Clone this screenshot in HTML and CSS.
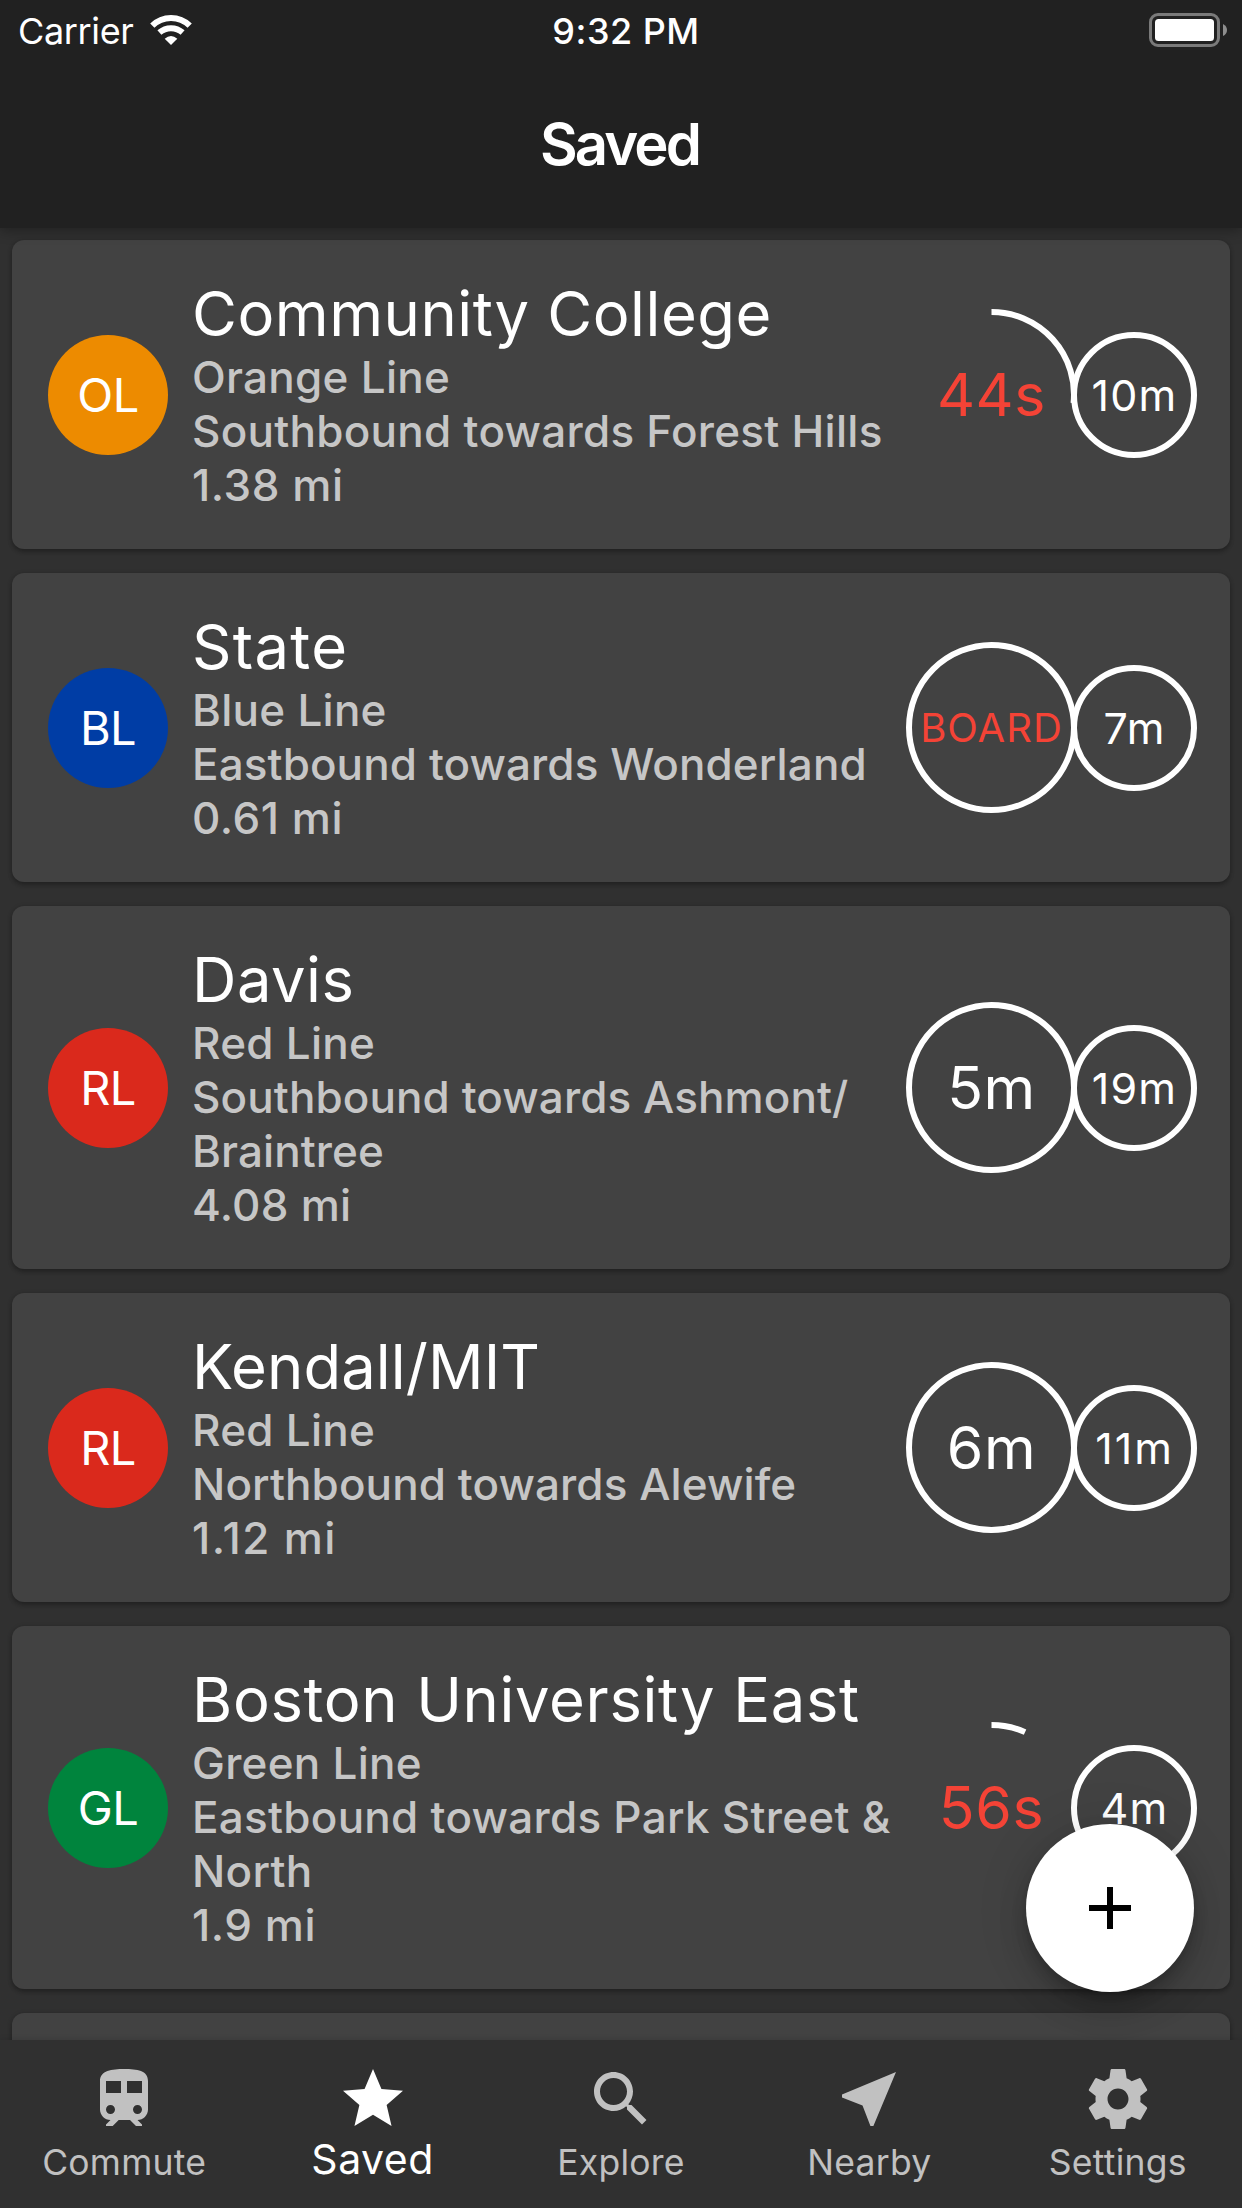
FILE: index.html
```
<!DOCTYPE html>
<html lang="en">
<head>
<meta charset="utf-8">
<title>Saved</title>
<link rel="stylesheet" href="styles.css">
</head>
<body>
<div class="app">
  <header class="app-bar">
    <div class="status">
      <div class="status-left">
        <span class="carrier">Carrier</span>
        <svg class="wifi" width="42" height="30" viewBox="0 0 42 30">
          <path d="M2.3 10.7A26.6 26.6 0 0 1 39.7 10.7" fill="none" stroke="#fff" stroke-width="6"/>
          <path d="M9.4 17.6A17.5 17.5 0 0 1 32.6 17.6" fill="none" stroke="#fff" stroke-width="6"/>
          <path d="M14.7 23.8Q21 18.4 27.3 23.8L21 30Z" fill="#fff"/>
        </svg>
      </div>
      <span class="time">9:32 PM</span>
      <svg class="battery" width="78" height="34" viewBox="0 0 78 34">
        <rect x="1.5" y="1.5" width="68" height="31" rx="7.5" fill="none" stroke="#7a7a7a" stroke-width="3"/>
        <rect x="6" y="6" width="59" height="22" rx="3.5" fill="#fff"/>
        <path d="M74 11Q78 13 78 17T74 23Z" fill="#8e8e8e"/>
      </svg>
    </div>
    <h1 class="title">Saved</h1>
  </header>

  <main class="list">
    <article class="card">
      <div class="avatar orange">OL</div>
      <div class="info">
        <h2>Community College</h2>
        <p>Orange Line</p>
        <p>Southbound towards Forest Hills</p>
        <p class="distance">1.38 mi</p>
      </div>
      <div class="dial large">
        <svg viewBox="0 0 165 165"><path d="M82.5 0A82.5 82.5 0 0 1 164.55 91.12"/></svg>
        <span class="soon">44s</span>
      </div>
      <div class="dial small">
        <svg viewBox="0 0 120 120"><circle cx="60" cy="60" r="60"/></svg>
        <span>10m</span>
      </div>
    </article>

    <article class="card">
      <div class="avatar blue">BL</div>
      <div class="info">
        <h2 class="short">State</h2>
        <p>Blue Line</p>
        <p class="snug">Eastbound towards Wonderland</p>
        <p class="distance">0.61 mi</p>
      </div>
      <div class="dial large">
        <svg viewBox="0 0 165 165"><circle cx="82.5" cy="82.5" r="82.5"/></svg>
        <span class="soon board">BOARD</span>
      </div>
      <div class="dial small">
        <svg viewBox="0 0 120 120"><circle cx="60" cy="60" r="60"/></svg>
        <span>7m</span>
      </div>
    </article>

    <article class="card">
      <div class="avatar red">RL</div>
      <div class="info">
        <h2>Davis</h2>
        <p>Red Line</p>
        <p class="snug">Southbound towards Ashmont/<br>Braintree</p>
        <p>4.08 mi</p>
      </div>
      <div class="dial large">
        <svg viewBox="0 0 165 165"><circle cx="82.5" cy="82.5" r="82.5"/></svg>
        <span>5m</span>
      </div>
      <div class="dial small">
        <svg viewBox="0 0 120 120"><circle cx="60" cy="60" r="60"/></svg>
        <span>19m</span>
      </div>
    </article>

    <article class="card">
      <div class="avatar red">RL</div>
      <div class="info">
        <h2 class="snug">Kendall/MIT</h2>
        <p>Red Line</p>
        <p class="snug">Northbound towards Alewife</p>
        <p class="distance ones">1.12 mi</p>
      </div>
      <div class="dial large">
        <svg viewBox="0 0 165 165"><circle cx="82.5" cy="82.5" r="82.5"/></svg>
        <span>6m</span>
      </div>
      <div class="dial small">
        <svg viewBox="0 0 120 120"><circle cx="60" cy="60" r="60"/></svg>
        <span class="ones">11m</span>
      </div>
    </article>

    <article class="card">
      <div class="avatar green">GL</div>
      <div class="info">
        <h2 class="long">Boston University East</h2>
        <p>Green Line</p>
        <p>Eastbound towards Park Street &amp;<br>North</p>
        <p class="distance">1.9 mi</p>
      </div>
      <div class="dial large">
        <svg viewBox="0 0 165 165"><path d="M82.5 0A82.5 82.5 0 0 1 116.06 7.13"/></svg>
        <span class="soon">56s</span>
      </div>
      <div class="dial small">
        <svg viewBox="0 0 120 120"><circle cx="60" cy="60" r="60"/></svg>
        <span>4m</span>
      </div>
    </article>

    <article class="card"></article>
  </main>

  <button class="fab" aria-label="Add">
    <svg width="42" height="42" viewBox="0 0 42 42"><path d="M18 0h6v18h18v6H24v18h-6V24H0v-6h18z"/></svg>
  </button>

  <nav class="tabs">
    <a class="tab">
      <svg viewBox="0 0 24 24"><path d="M12 2c-4 0-8 .5-8 4v9.5C4 17.43 5.57 19 7.5 19L6 20.5v.5h2.23l2-2H14l2 2h2v-.5L16.500 19c1.930 0 3.500-1.570 3.500-3.500V6c0-3.500-3.580-4-8-4zM7.500 17c-.830 0-1.500-.670-1.500-1.500S6.670 14 7.500 14s1.500.670 1.500 1.500S8.330 17 7.500 17zm3.500-7H6V6h5v4zm2 0V6h5v4h-5zm3.500 7c-.830 0-1.500-.670-1.500-1.500s.670-1.500 1.500-1.500 1.500.670 1.500 1.500-.670 1.500-1.500 1.500z"/></svg>
      <span>Commute</span>
    </a>
    <a class="tab active">
      <svg viewBox="0 0 24 24"><path d="M12 17.270L18.180 21l-1.640-7.030L22 9.240l-7.190-.610L12 2 9.190 8.630 2 9.240l5.460 4.730L5.820 21z"/></svg>
      <span>Saved</span>
    </a>
    <a class="tab">
      <svg viewBox="0 0 24 24"><path d="M15.500 14h-.790l-.280-.270C15.410 12.590 16 11.110 16 9.500 16 5.910 13.090 3 9.500 3S3 5.910 3 9.500 5.910 16 9.500 16c1.610 0 3.090-.590 4.230-1.570l.270.280v.790l5 4.990L20.490 19l-4.990-5zm-6 0C7.010 14 5 11.990 5 9.500S7.010 5 9.500 5 14 7.010 14 9.500 11.990 14 9.500 14z"/></svg>
      <span>Explore</span>
    </a>
    <a class="tab">
      <svg viewBox="0 0 24 24"><path d="M21 3L3 10.530v.980l6.840 2.650L12.480 21h.980L21 3z"/></svg>
      <span>Nearby</span>
    </a>
    <a class="tab">
      <svg viewBox="0 0 24 24"><path d="M19.430 12.980c.040-.320.070-.640.070-.980s-.030-.660-.070-.980l2.110-1.650c.190-.150.240-.420.120-.640l-2-3.460c-.120-.220-.390-.300-.610-.220l-2.490 1c-.520-.400-1.080-.730-1.690-.980l-.380-2.650C14.460 2.180 14.250 2 14 2h-4c-.250 0-.460.180-.490.420l-.380 2.650c-.610.250-1.170.590-1.690.980l-2.490-1c-.230-.090-.490 0-.610.220l-2 3.460c-.130.220-.070.490.120.640l2.110 1.650c-.040.320-.070.650-.070.980s.030.660.070.980l-2.110 1.650c-.190.150-.240.420-.120.640l2 3.460c.120.220.390.300.610.220l2.490-1c.520.400 1.080.730 1.690.980l.380 2.650c.030.240.240.420.490.420h4c.250 0 .460-.180.490-.420l.380-2.650c.610-.250 1.170-.590 1.690-.980l2.490 1c.230.090.490 0 .610-.220l2-3.460c.120-.220.070-.490-.120-.640l-2.110-1.650zM12 15.500c-1.930 0-3.500-1.570-3.500-3.500s1.570-3.500 3.500-3.500 3.500 1.570 3.500 3.500-1.570 3.500-3.500 3.500z"/></svg>
      <span>Settings</span>
    </a>
  </nav>
</div>
</body>
</html>
```
FILE: styles.css
```
* {
  box-sizing: border-box;
}

body {
  margin: 0;
  background: #303030;
  color: #fff;
  font-family: Inter, "Liberation Sans", sans-serif;
}

h1, h2, p {
  margin: 0;
  font-weight: 400;
}

.app {
  position: relative;
  display: flex;
  flex-direction: column;
  width: 1242px;
  height: 2208px;
  overflow: hidden;
}

/* Header */
.app-bar {
  position: relative;
  z-index: 1;
  flex: none;
  height: 228px;
  background: #212121;
  box-shadow: 0 3px 12px rgba(0, 0, 0, .3);
}

.status {
  display: grid;
  grid-template-columns: 1fr auto 1fr;
  align-items: center;
  height: 60px;
  padding: 0 15px 0 17px;
  font-size: 36px;
  line-height: 58px;
}

.status-left {
  display: flex;
  align-items: center;
  gap: 16px;
}

.carrier {
  padding: 2px 0 0 1px;
  letter-spacing: -.35px;
}

.time {
  padding: 2px 0 0 8px;
  font-weight: 500;
  letter-spacing: .5px;
}

.battery {
  justify-self: end;
}

.title {
  padding-right: 3px;
  font-size: 58px;
  font-weight: 600;
  line-height: 168px;
  letter-spacing: -2.9px;
  text-align: center;
}

/* Saved stops */
.list {
  flex: 1;
  min-height: 0;
  display: flex;
  flex-direction: column;
  gap: 24px;
  padding: 12px 12px 0;
  overflow: hidden;
}

.card {
  flex: none;
  display: flex;
  align-items: center;
  min-height: 120px;
  padding: 38px 36px 37px;
  border-radius: 12px;
  background: #424242;
  box-shadow: 0 3px 4px rgba(0, 0, 0, .2), 0 1px 5px rgba(0, 0, 0, .18);
}

.avatar {
  flex: none;
  width: 120px;
  height: 120px;
  margin: 0 24px 1px 0;
  border-radius: 50%;
  font-size: 47px;
  line-height: 120px;
  letter-spacing: -.6px;
  text-align: center;
}

.orange { background: #ed8b00; }
.blue { background: #003da5; }
.red { background: #da291c; }
.green { background: #00843d; }

.info {
  flex: 1;
  min-width: 0;
  white-space: nowrap;
}

.info h2 {
  font-size: 61.5px;
  line-height: 72px;
  letter-spacing: .5px;
}

.info p {
  color: #c6c6c6;
  font-size: 44px;
  font-weight: 500;
  line-height: 54px;
  letter-spacing: .27px;
}

/* Tracking adjustments for individual lines */
.info .snug { letter-spacing: .1px; }
.info .short { letter-spacing: 1.3px; }
.info .long { letter-spacing: .65px; }
.info .distance { letter-spacing: .55px; }
.info .ones { letter-spacing: 1.4px; }

.dial {
  flex: none;
  display: grid;
  place-items: center;
  margin-bottom: 1px;
}

.dial > * {
  grid-area: 1 / 1;
}

.dial svg {
  width: 100%;
  height: 100%;
  overflow: visible;
  fill: none;
  stroke: #fff;
  stroke-width: 6px;
}

.large {
  width: 165px;
  height: 165px;
  font-size: 59px;
  letter-spacing: .6px;
}

.small {
  width: 120px;
  height: 120px;
  padding-left: 0;
  font-size: 43px;
  letter-spacing: 1.2px;
}

.small span {
  padding: 1px 0 0 1px;
}

.small .ones {
  letter-spacing: 2px;
}

.soon {
  color: #f44336;
}

.board {
  font-size: 40px;
  letter-spacing: 1px;
}

/* Add button */
.fab {
  position: absolute;
  right: 48px;
  bottom: 216px;
  display: grid;
  place-items: center;
  width: 168px;
  height: 168px;
  padding: 0;
  border: 0;
  border-radius: 50%;
  background: #fff;
  box-shadow: 0 9px 15px -3px rgba(0, 0, 0, .2), 0 18px 30px rgba(0, 0, 0, .14), 0 3px 54px rgba(0, 0, 0, .12);
}

/* Bottom navigation */
.tabs {
  position: relative;
  z-index: 1;
  flex: none;
  display: grid;
  grid-template-columns: repeat(5, 1fr);
  height: 168px;
  padding-top: 23px;
  background: #303030;
  box-shadow: 0 0 6px rgba(0, 0, 0, .15);
}

.tab {
  display: flex;
  flex-direction: column;
  align-items: center;
  color: #c1c1c1;
  font-size: 35.5px;
  line-height: 56px;
  letter-spacing: .25px;
}

.tab svg {
  width: 72px;
  height: 72px;
  fill: currentColor;
}

.active {
  color: #fff;
  font-size: 41px;
  line-height: 48px;
  letter-spacing: .5px;
}
```
